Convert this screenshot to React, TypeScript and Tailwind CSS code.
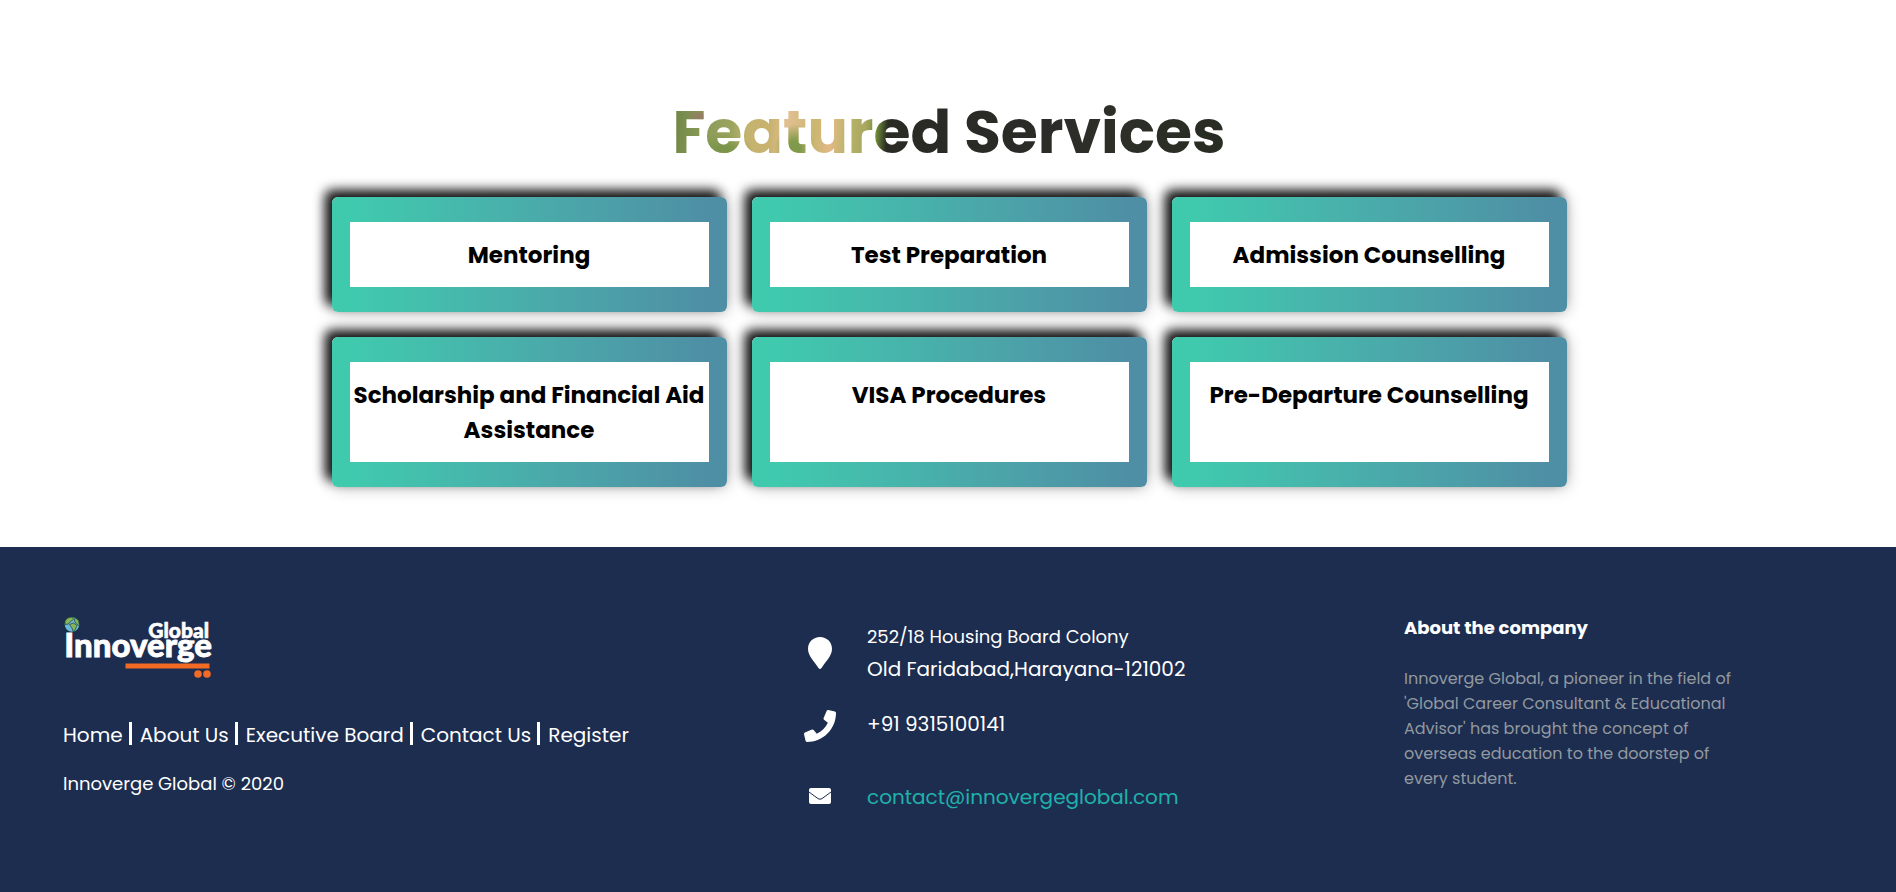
import { FaPhone } from "react-icons/fa";

const services = [
  "Mentoring",
  "Test Preparation",
  "Admission Counselling",
  "Scholarship and Financial Aid Assistance",
  "VISA Procedures",
  "Pre-Departure Counselling",
];

const links = ["Home", "About Us", "Executive Board", "Contact Us", "Register"];

function Logo() {
  return (
    <svg
      width="152"
      height="70"
      viewBox="0 0 152 70"
      role="img"
      aria-label="Innoverge Global"
      className="font-['Lato',sans-serif]"
    >
      <circle cx="9" cy="12.500" r="7.900" fill="#6cb8dc" stroke="#14303c" strokeWidth="1.200" />
      <g fill="#86b552" stroke="#1d3f48" strokeWidth=".7">
        <path d="M2 9 L4.500 6 L9.500 5 L10.500 7.500 L7.500 9.500 L5.500 12 L2 12.500 Z" />
        <path d="M12 5.500 L15.500 8.500 L16.500 14 L13.500 12 L11.500 9 Z" />
        <path d="M6.500 12.500 L10.500 11 L14 13.500 L12 18 L10 19.500 L9 16 Z" />
      </g>
      <g fill="#fff" stroke="#fff" fontWeight="900">
        <text x="146" y="26" textAnchor="end" fontSize="21" strokeWidth=".6">Global</text>
        <text x="149" y="45" textAnchor="end" fontSize="33" strokeWidth=".8">Innoverge</text>
      </g>
      <g fill="#f26a24">
        <rect x="62.500" y="51.500" width="84" height="5" />
        <circle cx="135" cy="62" r="3.800" />
        <circle cx="144" cy="62" r="3.800" />
      </g>
    </svg>
  );
}

export default function App() {
  return (
    <div className="bg-white font-['Poppins','Inter',sans-serif]">
      <main className="flex flex-col items-center pt-[87px] pr-6 pb-[60px] pl-[26px]">
        <h1 className="bg-[radial-gradient(ellipse_20px_24px_at_22%_68%,#7f9a4a_30%,transparent_100%),radial-gradient(ellipse_30px_16px_at_9%_70%,#7b944a_20%,transparent_100%),radial-gradient(ellipse_14px_8px_at_5%_33%,#a5647080_20%,transparent_100%),linear-gradient(95deg,#6d8444_0%,#8a9a58_6%,#9aa45f_11%,#c4b36f_14%,#c8b26e_18%,#e2bf92_21%,#c9b670_26%,#e2b986_29%,#b7b468_32%,#a9a860_35%,#6f8f38_37%,#2b2b25_39%,#2a2a27_60%,#2d2f28_80%,#272d22_100%)] bg-clip-text text-center text-[60px] leading-[90px] font-bold text-transparent">
          Featured Services
        </h1>
        <ul className="mt-5 grid w-full max-w-[1235px] grid-cols-3 gap-[25px]">
          {services.map((name) => (
            <li
              key={name}
              className="flex rounded-md bg-linear-to-r from-[#3fcaae] from-5% to-[#4e8fa5] to-95% px-[18px] py-[25px] shadow-[-7px_-7px_12px_#111,0_0_15px_rgba(0,0,0,0.3)]"
            >
              <h2 className="flex-1 bg-white pt-4 pb-3.5 text-center text-[23px] leading-[35px] font-bold text-black">
                {name}
              </h2>
            </li>
          ))}
        </ul>
      </main>

      <footer className="grid grid-cols-[741fr_600fr_430fr] bg-[#1d2d50] pt-[65px] pr-[62px] pb-20 pl-[63px] text-white">
        <div>
          <Logo />
          <nav className="mt-[38px] flex items-center text-xl leading-[30px]">
            {links.map((name, i) => (
              <span key={name} className="flex items-center">
                {i > 0 && <span className="mr-2 mb-1 ml-1.5 h-[23px] w-[3px] bg-white" />}
                <a href="#">{name}</a>
              </span>
            ))}
          </nav>
          <p className="mt-[19px] text-lg leading-[30px]">Innoverge Global © 2020</p>
        </div>

        <address className="not-italic">
          <div className="flex items-center gap-[31px] pt-2">
            <svg width="32" height="32" viewBox="0 0 32 32" fill="#fff" aria-hidden="true">
              <path d="M16 0 C9.400 0 4 5 4 11.700 C4 19 10 24 14.500 31 Q16 33 17.500 31 C22 24 28 19 28 11.700 C28 5 22.600 0 16 0 Z" />
            </svg>
            <p className="text-lg leading-[33px]">
              252/18 Housing Board Colony
              <br />
              <span className="text-xl leading-[33px]">Old Faridabad,Harayana-121002</span>
            </p>
          </div>
          <div className="mt-[23px] flex items-center gap-[31px]">
            <FaPhone size={32} aria-hidden="true" />
            <p className="pb-1 text-xl leading-[30px]">+91 9315100141</p>
          </div>
          <div className="mt-[38px] flex items-center gap-[31px]">
            <svg width="32" height="32" viewBox="0 0 32 32" aria-hidden="true">
              <rect x="5" y="7" width="22" height="16" rx="2" fill="#fff" />
              <path d="M5 11 L14 17.600 Q16 19 18 17.600 L27 11" fill="none" stroke="#1d2d50" strokeWidth="1" />
            </svg>
            <a href="mailto:contact@innovergeglobal.com" className="text-xl leading-[30px] text-[#20b2aa]">
              contact@innovergeglobal.com
            </a>
          </div>
        </address>

        <section className="max-w-[345px]">
          <h3 className="pt-[3px] text-lg leading-[25px] font-bold">About the company</h3>
          <p className="mt-[26px] text-base leading-[25px] text-[#92999f]">
            Innoverge Global, a pioneer in the field of 'Global Career Consultant &amp; Educational Advisor' has
            brought the concept of overseas education to the doorstep of every student.
          </p>
        </section>
      </footer>
    </div>
  );
}
